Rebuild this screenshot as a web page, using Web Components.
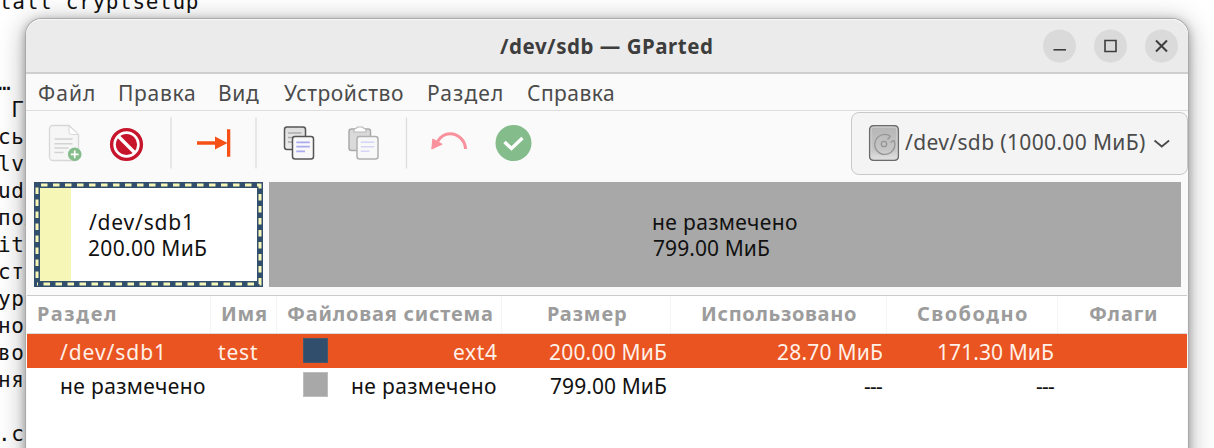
<!DOCTYPE html>
<html lang="ru"><head><meta charset="utf-8"><title>/dev/sdb — GParted</title>
<style>
html,body{margin:0;width:1214px;height:448px;overflow:hidden;background:#fff}
</style></head><body><gparted-desktop></gparted-desktop>
<script>
const define=(name,html)=>customElements.define(name,class extends HTMLElement{
  constructor(){super();this.attachShadow({mode:'open'}).innerHTML=html;}
});

/* Single-line label whose ink box is exactly `w` pixels wide; `x` is its left margin. */
const ctx=document.createElement('canvas').getContext('2d');
customElements.define('fit-text',class extends HTMLElement{
  constructor(){super();this.attachShadow({mode:'open'}).innerHTML=`<style>:host{display:block;flex:none;white-space:pre}span{display:block;width:max-content}</style><span><slot></slot></span>`;}
  connectedCallback(){
    const cs=getComputedStyle(this),t=this.textContent,w=+this.getAttribute('w');
    ctx.font=`${cs.fontWeight} ${cs.fontSize} ${cs.fontFamily}`;
    const m=ctx.measureText(t);
    const ink=m.actualBoundingBoxLeft+m.actualBoundingBoxRight;
    this.style.width=w+'px';
    this.style.marginLeft=(this.getAttribute('x')||0)+'px';
    const s=this.shadowRoot.querySelector('span');
    s.style.letterSpacing=((w-ink)/(t.length-1)).toFixed(3)+'px';
    s.style.marginLeft=m.actualBoundingBoxLeft+'px';
  }
});

define('terminal-text',`<style>:host{display:block;box-sizing:border-box;width:1214px;height:448px;background:#fff;overflow:hidden;font:21px/27px "DejaVu Sans Mono",monospace;letter-spacing:.7px;color:#111}
div{height:27px;width:max-content;margin-left:-2px;white-space:pre}
.first{margin-top:-11px;margin-left:-1px}</style>
<div class="first">tall cryptsetup</div><div></div><div></div><div>…</div><div> Го</div><div>сь</div><div>lvm</div><div>ude</div><div>пол</div><div>it</div><div>ст</div><div>ур</div><div>но</div><div>во</div><div>ня</div><div></div><div>.co</div>`);

define('title-bar',`<style>
:host{display:flex;align-items:center;height:55px;box-sizing:border-box;background:#ebebeb;border-bottom:2px solid #cfcfcf;border-radius:16px 16px 0 0;box-shadow:inset 0 1px #f7f7f7;font-weight:700;font-size:20.5px;color:#3d3d3d}
svg{display:block;margin-left:330px}</style>
<fit-text x="474" w="212">/dev/sdb — GParted</fit-text>
<svg width="137" height="34" viewBox="0 0 137 34"><g fill="#dadada"><circle cx="17.5" cy="17" r="16.5"/><circle cx="68.5" cy="17" r="16.5"/><circle cx="119.5" cy="17" r="16.5"/></g>
<g fill="none" stroke="#3d3d3d" stroke-width="1.6"><path d="M11.5 20.8h12.5"/><path d="M63 11.5h11v11h-11z"/><path d="M114 11.5l11 11m0-11l-11 11" stroke-width="2"/></g></svg>`);

define('menu-bar',`<style>:host{display:flex;height:37px;line-height:39px;box-sizing:border-box;border-bottom:1px solid #dedede;color:#4b4b4b}</style>
<fit-text x="13" w="55">Файл</fit-text><fit-text x="26" w="74">Правка</fit-text><fit-text x="26" w="39">Вид</fit-text><fit-text x="25" w="119">Устройство</fit-text><fit-text x="26" w="73">Раздел</fit-text><fit-text x="26" w="85">Справка</fit-text>`);

define('device-combo',`<style>:host{display:flex;box-sizing:border-box;width:337px;height:63px;border:1.5px solid #c9c9c9;border-radius:8px;background:#f4f4f4;color:#4b4b4b;line-height:59px}svg{display:block}</style>
<svg style="margin:11px 0 0 16px" width="32" height="38" viewBox="0 0 32 38"><defs><linearGradient id="d" x2="0" y2="1"><stop stop-color="#b5b5b5"/><stop offset=".7" stop-color="#c6c6c6"/><stop offset="1" stop-color="#e5e5e5"/></linearGradient></defs>
<rect x="1.7" y="1.7" width="28.6" height="34.6" rx="3.5" fill="url(#d)" stroke="#6b6b6b" stroke-width="1.5"/><rect x="3" y="3" width="26" height="32" rx="2.5" fill="none" stroke="#d6d6d6"/>
<g fill="none" stroke="#969696" stroke-width="1.3"><path d="M22.500 12.200A10 10 0 1 0 26 16.500l-3.500 1.800M22.500 12.200l-3 3.300"/><circle cx="16" cy="20" r="2.700"/></g></svg>
<fit-text x="5" w="240">/dev/sdb (1000.00 МиБ)</fit-text>
<svg style="margin:26px 0 0 8px" width="18" height="10" viewBox="0 0 18 10"><path d="M1.500 1.500l7.300 6 7.300-6" fill="none" stroke="#4b4b4b" stroke-width="1.800"/></svg>`);

define('tool-bar',`<style>:host{display:flex;height:70px}svg{display:block;flex:none}device-combo{margin:1px 0 0 304px}</style>
<svg width="521" height="64" viewBox="26 111 521 64">
<defs><linearGradient id="g" x2="0" y2="1"><stop stop-color="#ddd"/><stop offset="1" stop-color="#eee"/></linearGradient></defs>
<path d="M53 125.500h16l9.500 9V157a3.500 3.500 0 0 1-3.500 3.500H53a3.500 3.500 0 0 1-3.500-3.500V129a3.500 3.500 0 0 1 3.500-3.500z" fill="#f6f6f6" stroke="#d8d8d8" stroke-width="1.300"/>
<path d="M69 126v6q0 2.500 2.500 2.500h7z" fill="#fff" stroke="#d8d8d8"/>
<path d="M54.500 139h18M54.500 143.700h18M54.500 148h14M54.500 152.500h9" stroke="#d2d2d2" stroke-width="1.500"/>
<circle cx="74.700" cy="154.300" r="6.800" fill="#84bd8b"/><path d="M70.800 154.300h7.800m-3.900-3.900v7.800" stroke="#fff" stroke-width="1.700"/>
<circle cx="126.500" cy="144.500" r="14.900" fill="#fff" stroke="#c7162b" stroke-width="3.400"/><circle cx="126.500" cy="144.500" r="10.600" fill="#c7162b"/><path d="M118.500 136.500l16 16" stroke="#fff" stroke-width="3.300"/>
<path d="M171 117.500v51M256 117.500v51M406.500 117.500v51" stroke="#dedede" stroke-width="1.300"/>
<g fill="#f75017"><path d="M197 141.300h19v3.400h-19zM215 136.500l12.500 6.500-12.500 6.500zM227 129.300h3.300v27.400H227z"/></g>
<g stroke-width="1.500"><rect x="284.500" y="127" width="21" height="22.500" rx="2.500" fill="url(#g)" stroke="#555"/><path d="M288 133h13.500M288 137.500h6M288 142h4" stroke="#aaa"/>
<rect x="292.500" y="136.500" width="21" height="22.500" rx="2.500" fill="#f8f8f8" stroke="#555"/><path d="M296.300 142.300h13.500M296.300 146.700h13.500M296.300 151.300h8.700" stroke="#aaaaf0" stroke-width="1.700"/></g>
<g stroke-width="1.500"><rect x="349" y="129" width="21.500" height="21.500" rx="2.500" fill="#dadada" stroke="#aaa"/><path d="M354 132v-2q0-1.500 2-1.500l1.500-1.500h5l1.500 1.500q2 0 2 1.500v2z" fill="#fff" stroke="#b8b8b8" stroke-width="1.200"/>
<rect x="357" y="136.500" width="21" height="22.500" rx="2.500" fill="#f8f8f8" stroke="#b0b0b0"/><path d="M360.800 142.300h13.500M360.800 146.700h13.500M360.800 151.300h8.700" stroke="#d4d4f6"/></g>
<path d="M437.500 141.500c3-5 7.500-7.800 12.500-7.800 8 0 15.300 6.500 15.500 15.300" fill="none" stroke="#fa909c" stroke-width="3"/><path d="M432.800 139l9.300 5.200-10.300 4.800z" fill="#fa909c" stroke="#fa909c" stroke-linejoin="round"/>
<circle cx="513.500" cy="143" r="18" fill="#84bd8b"/><path d="M504.500 142l7 6.500 11-10.500" fill="none" stroke="#fff" stroke-width="3.400"/>
</svg><device-combo></device-combo>`);

define('disk-map',`<style>
:host{display:flex;gap:6px;padding:1px 0 0 8px;height:114px;box-sizing:border-box;color:#111;line-height:26px}
.sel{display:grid;width:229px;height:105px}
.sel>*{grid-area:1/1}
.part{display:flex;margin:6px;background:#fff}
.used{width:31px;background:#f6f6b7}
.label{padding-top:21px;margin-left:18px}
.free{display:flex;width:912px;height:105px;background:#a8a8a8}
.free .label{margin-left:384px;padding-top:27px}
svg{display:block}</style>
<div class="sel"><svg width="229" height="105"><rect x="3" y="3" width="223" height="99" fill="none" stroke="#314e6c" stroke-width="6"/><g fill="none" stroke="#f6f6b7" stroke-width="3" stroke-dasharray="6.500 5.500"><path d="M7 3h219v99H3"/><path d="M3 5.500v95"/></g></svg>
<div class="part"><div class="used"></div><div class="label"><fit-text w="101">/dev/sdb1</fit-text><fit-text w="117">200.00 МиБ</fit-text></div></div></div>
<div class="free"><div class="label"><fit-text w="144">не размечено</fit-text><fit-text w="116">799.00 МиБ</fit-text></div></div>`);

define('fs-swatch',`<style>:host{display:block;flex:none;box-sizing:border-box;width:25px;height:25px;margin:4px 0 0 26px;background:var(--c);border:1px solid var(--b)}</style>`);

define('partition-table',`<style>
:host{display:block;height:160px;margin:0 1px;background:#fff;border-top:1px solid #cbcbcb;color:#111}
.row{display:grid;grid-template-columns:184px 66px 225px 169px 216px 171px 1fr;height:35px;line-height:36px}
.row>div{display:flex}
.head{height:38px;line-height:36px;color:#9c9c9c;font-weight:700;font-size:20px;box-sizing:border-box;border-bottom:1px solid #ddd}
.head>div:not(:last-child){box-shadow:inset -1px 0 #f5f5f5}
.on{background:#e95420;color:#fff0e8;height:34px}
</style>
<div class="row head"><div><fit-text x="11" w="77">Раздел</fit-text></div><div><fit-text x="11" w="44">Имя</fit-text></div><div><fit-text x="11" w="204">Файловая система</fit-text></div><div><fit-text x="46" w="78">Размер</fit-text></div><div><fit-text x="31" w="154">Использовано</fit-text></div><div><fit-text x="31" w="109">Свободно</fit-text></div><div><fit-text x="32" w="66">Флаги</fit-text></div></div>
<div class="row on"><div><fit-text x="33" w="102">/dev/sdb1</fit-text></div><div><fit-text x="7" w="40">test</fit-text></div><div><fs-swatch style="--c:#314e6c;--b:#46586b"></fs-swatch><fit-text x="126" w="43">ext4</fit-text></div><div><fit-text x="48" w="116">200.00 МиБ</fit-text></div><div><fit-text x="107" w="104">28.70 МиБ</fit-text></div><div><fit-text x="51" w="115">171.30 МиБ</fit-text></div><div></div></div>
<div class="row"><div><fit-text x="34" w="144">не размечено</fit-text></div><div></div><div><fs-swatch style="--c:#a8a8a8;--b:#bdbdbd"></fs-swatch><fit-text x="24" w="144">не размечено</fit-text></div><div><fit-text x="48" w="116">799.00 МиБ</fit-text></div><div><fit-text x="193" w="18">---</fit-text></div><div><fit-text x="149" w="18">---</fit-text></div><div></div></div>`);

define('app-window',`<style>:host{display:block;width:1162px;height:460px;background:#fafafa;border-radius:16px 16px 0 0;font:21px "Noto Sans","Open Sans",sans-serif;box-shadow:0 0 0 1px #aaa,0 2px 8px 1px rgba(0,0,0,.3),0 4px 26px 3px rgba(0,0,0,.26)}</style>
<title-bar></title-bar><menu-bar></menu-bar><tool-bar></tool-bar><disk-map></disk-map><partition-table></partition-table>`);

/* The window floats over the terminal on the desktop. */
define('gparted-desktop',`<style>:host{display:block;position:relative;width:1214px;height:448px;overflow:hidden}app-window{position:absolute;left:26px;top:19px}</style>
<terminal-text></terminal-text><app-window></app-window>`);
</script></body></html>
